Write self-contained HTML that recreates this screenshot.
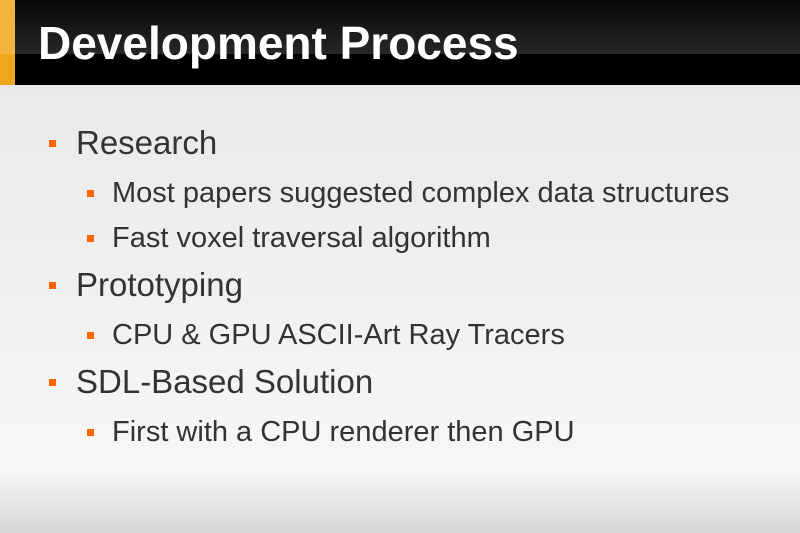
<!DOCTYPE html>
<html><head><style>
html,body{margin:0;padding:0}
body{width:800px;height:533px;position:relative;overflow:hidden;font-family:"Liberation Sans",Arial,sans-serif;
background:linear-gradient(to bottom,#e9e9e9 85px,#f7f7f7 470px,#d6d6d6 533px);}
.hd{position:absolute;left:0;top:0;width:800px;height:85px;background:#000}
.hd .g{position:absolute;left:0;top:0;width:800px;height:54px;background:linear-gradient(#080808,#272727)}
.bar{position:absolute;left:0;top:0;width:15px;height:85px;background:#eea718}
.bar .t{position:absolute;left:0;top:0;width:15px;height:54px;background:#f3b43e}
.title{position:absolute;left:38px;top:17px;font-size:46px;font-weight:bold;color:#fff;white-space:nowrap;line-height:52px}
.l{position:absolute;white-space:nowrap;color:#333}
.l1{left:76px;font-size:33px;line-height:40px}
.l2{left:112px;font-size:29px;line-height:34px}
.b{position:absolute;width:7px;height:7px;background:#ff6600}
</style></head><body>
<div class="hd"><div class="g"></div></div>
<div class="bar"><div class="t"></div></div>
<div class="title">Development Process</div>

<div class="b" style="left:49px;top:140px"></div><div class="l l1" style="top:123px">Research</div>
<div class="b" style="left:87px;top:190px"></div><div class="l l2" style="top:176px">Most papers suggested complex data structures</div>
<div class="b" style="left:87px;top:235px"></div><div class="l l2" style="top:221px">Fast voxel traversal algorithm</div>
<div class="b" style="left:49px;top:282px"></div><div class="l l1" style="top:265px">Prototyping</div>
<div class="b" style="left:87px;top:332px"></div><div class="l l2" style="top:318px">CPU &amp; GPU ASCII-Art Ray Tracers</div>
<div class="b" style="left:49px;top:379px"></div><div class="l l1" style="top:362px">SDL-Based Solution</div>
<div class="b" style="left:87px;top:429px"></div><div class="l l2" style="top:415px">First with a CPU renderer then GPU</div>
</body></html>
